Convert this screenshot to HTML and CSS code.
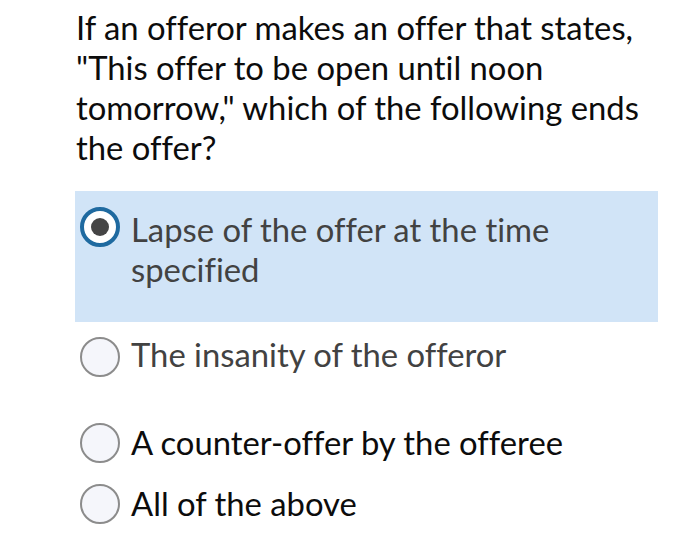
FILE: index.html
```html
<!DOCTYPE html>
<html lang="en">
<head>
<meta charset="utf-8">
<link rel="stylesheet" href="styles.css">
</head>
<body>
<main class="quiz">
  <p class="question">If an offeror makes an offer that states, "This offer to be open until noon tomorrow," which of the following ends the offer?</p>
  <ul class="options">
    <li class="option option--selected">
      <span class="radio radio--checked"></span>
      <span class="label label--muted">Lapse of the offer at the time specified</span>
    </li>
    <li class="option option--second">
      <span class="radio"></span>
      <span class="label label--muted">The insanity of the offeror</span>
    </li>
    <li class="option option--third">
      <span class="radio"></span>
      <span class="label">A counter-offer by the offeree</span>
    </li>
    <li class="option option--fourth">
      <span class="radio"></span>
      <span class="label">All of the above</span>
    </li>
  </ul>
</main>
</body>
</html>
```
FILE: styles.css
```css
html, body {
  margin: 0;
  padding: 0;
  background: #ffffff;
}
body {
  font-family: Lato, "Open Sans", sans-serif;
  font-variant-ligatures: none;
  color: #111;
}
.quiz {
  width: 700px;
  height: 543px;
  overflow: hidden;
}
.question {
  margin: 0;
  width: 575px;
  padding: 8px 0 0 76px;
  font-size: 32.8px;
  line-height: 40px;
  color: #0c0c0c;
}
.options {
  list-style: none;
  margin: 0;
  padding: 0;
}
.option {
  display: flex;
  align-items: flex-start;
  gap: 11px;
  font-size: 32.8px;
  line-height: 40px;
}
.option--selected {
  margin: 23px 42px 0 75px;
  padding: 19px 60px 32px 5px;
  background: #d1e4f7;
}
.option--second {
  margin: 13px 0 0 80px;
}
.option--third {
  margin: 46px 0 0 80px;
}
.option--fourth {
  margin: 21px 0 0 80px;
}
.radio {
  flex: none;
  box-sizing: border-box;
  width: 40px;
  height: 40px;
  border-radius: 50%;
  border: 2px solid #8c8c8c;
  background: #f5f6fb;
  display: flex;
  align-items: center;
  justify-content: center;
}
.option--second .radio {
  margin-top: 2px;
}
.radio--checked {
  margin-top: -3px;
  border: 4px solid #1f6aa0;
  background: #ffffff;
}
.radio--checked::after {
  content: "";
  width: 18px;
  height: 18px;
  border-radius: 50%;
  background: #454545;
}
.label {
  color: #0c0c0c;
}
.label--muted {
  color: #424242;
}
```
